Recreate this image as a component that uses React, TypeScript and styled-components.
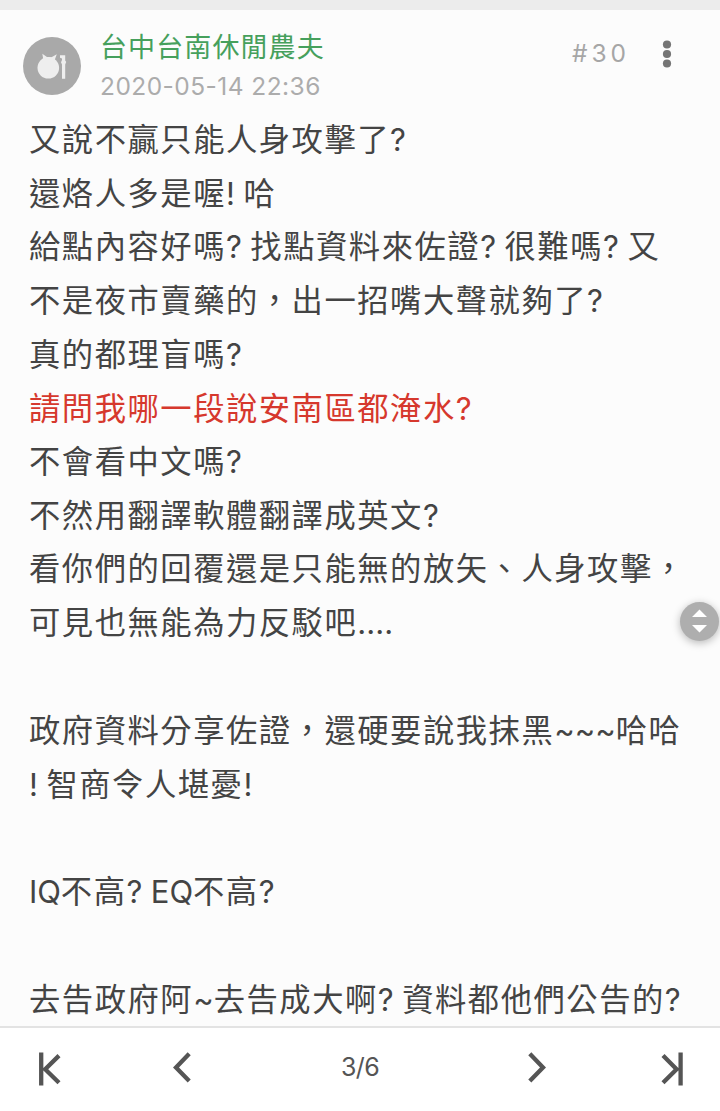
import React from "react";
import styled, { createGlobalStyle } from "styled-components";

const GlobalStyle = createGlobalStyle`
  * { box-sizing: border-box; }
  body {
    margin: 0;
    background: #fcfcfc;
    font-family: Inter, "Noto Sans CJK TC", sans-serif;
    color: #444;
  }
`;

const Page = styled.div`
  display: flex;
  flex-direction: column;
  width: 720px;
  height: 1111px;
  overflow: hidden;
  position: relative;
`;

const TopStrip = styled.div`
  flex: none;
  height: 10px;
  background: #ececec;
`;

const Header = styled.header`
  flex: none;
  display: flex;
  align-items: flex-start;
  height: 103px;
  padding: 18px 44px 0 23px;
`;

const Avatar = styled.svg`
  flex: none;
  width: 58px;
  height: 58px;
  margin: 9px 19px 0 0;
`;

const Author = styled.div`
  flex: 1;
  display: flex;
  flex-direction: column;
`;

const Name = styled.span`
  font-family: "Noto Sans CJK TC", sans-serif;
  font-size: 27px;
  line-height: 36px;
  letter-spacing: 1.1px;
  color: #46a05c;
`;

const PostTime = styled.time`
  font-size: 24.5px;
  line-height: 44px;
  letter-spacing: 0.45px;
  color: #acacac;
`;

const FloorNumber = styled.span`
  font-size: 24.5px;
  line-height: 50px;
  letter-spacing: 4px;
  color: #a6a6a6;
`;

const MoreIcon = styled.svg`
  flex: none;
  width: 18px;
  height: 30px;
  margin: 11px 0 0 28px;
`;

const Body = styled.main`
  flex: 1;
  min-height: 0;
  padding-left: 29px;
  overflow: hidden;
`;

const Line = styled.p<{ $alert?: boolean }>`
  margin: 0;
  height: 53.72px;
  line-height: 53.72px;
  font-size: 31.3px;
  letter-spacing: 1.53px;
  white-space: pre;
  color: ${(p) => (p.$alert ? "#d6382d" : "#444")};
`;

const Latin = styled.span<{ $track: number }>`
  font-size: 31px;
  letter-spacing: ${(p) => p.$track}px;
`;

const ScrollButton = styled.button`
  position: absolute;
  right: 1px;
  top: 602px;
  width: 39px;
  height: 39px;
  padding: 0;
  border: 0;
  border-radius: 50%;
  background: #aeaeae;
  box-shadow: 0 2px 8px rgba(0, 0, 0, 0.28);
  svg { display: block; }
`;

const Pager = styled.nav`
  flex: none;
  display: grid;
  grid-template-columns: 100px 164px 192px 162px 102px;
  height: 85px;
  border-top: 2px solid #e3e3e3;
  background: #fff;
`;

const PageButton = styled.button`
  padding: 0;
  border: 0;
  background: none;
  svg { display: block; }
`;

const PageCount = styled.span`
  font-size: 25px;
  line-height: 79px;
  letter-spacing: -0.6px;
  text-align: center;
  color: #555;
`;

const lines: { text: string; alert?: boolean }[] = [
  { text: "又說不贏只能人身攻擊了?" },
  { text: "還烙人多是喔! 哈" },
  { text: "給點內容好嗎? 找點資料來佐證? 很難嗎? 又" },
  { text: "不是夜市賣藥的，出一招嘴大聲就夠了?" },
  { text: "真的都理盲嗎?" },
  { text: "請問我哪一段說安南區都淹水?", alert: true },
  { text: "不會看中文嗎?" },
  { text: "不然用翻譯軟體翻譯成英文?" },
  { text: "看你們的回覆還是只能無的放矢、人身攻擊，" },
  { text: "可見也無能為力反駁吧...." },
  { text: "" },
  { text: "政府資料分享佐證，還硬要說我抹黑~~~哈哈" },
  { text: "! 智商令人堪憂!" },
  { text: "" },
  { text: "IQ不高? EQ不高?" },
  { text: "" },
  { text: "去告政府阿~去告成大啊? 資料都他們公告的?" },
];

const tracking = (run: string) => (run.startsWith(".") ? 0.1 : run.startsWith("~") ? 0 : -0.1);

function PostLine({ text, alert }: { text: string; alert?: boolean }) {
  return (
    <Line $alert={alert}>
      {text.split(/([\x20-\x7e]+)/).map((run, i) =>
        i % 2 ? (
          <Latin key={i} $track={tracking(run)}>{run}</Latin>
        ) : (
          run
        )
      )}
    </Line>
  );
}

export default function App() {
  return (
    <Page>
      <GlobalStyle />
      <TopStrip />
      <Header>
        <Avatar viewBox="0 0 58 58">
          <circle cx="29" cy="29" r="29" fill="#a9a9a9" />
          <g fill="#eee">
            <circle cx="25.3" cy="30.8" r="10.8" />
            <path d="M19.3 16.8 24.3 20.3H28.5L33.8 17.2 31.5 23.5 20.5 23.5Z" />
            <path d="M37 18.3H42.2V23.5L43.2 25 42.2 27.5V41.8H39V27.5L38 25.3 39 23V21.5L37 20.8Z" />
          </g>
        </Avatar>
        <Author>
          <Name>台中台南休閒農夫</Name>
          <PostTime>2020-05-14 22:36</PostTime>
        </Author>
        <FloorNumber>#30</FloorNumber>
        <MoreIcon viewBox="0 0 18 30" fill="#757575">
          <circle cx="9" cy="5.5" r="4.1" />
          <circle cx="9" cy="15" r="4.1" />
          <circle cx="9" cy="24.5" r="4.1" />
        </MoreIcon>
      </Header>
      <Body>
        {lines.map((line, i) => (
          <PostLine key={i} {...line} />
        ))}
      </Body>
      <Pager>
        <PageButton aria-label="First page">
          <svg width="100" height="83" viewBox="0 0 100 83" fill="none" stroke="#555" strokeWidth="4.3">
            <path d="M41.2 24.5V57.5M59 27.6 45.2 41.2 59 54.8" />
          </svg>
        </PageButton>
        <PageButton aria-label="Previous page">
          <svg width="164" height="83" viewBox="0 0 164 83" fill="none" stroke="#555" strokeWidth="4.3">
            <path d="M89.2 25.8 76 39.4 89.2 53" />
          </svg>
        </PageButton>
        <PageCount>3/6</PageCount>
        <PageButton aria-label="Next page">
          <svg width="162" height="83" viewBox="0 0 162 83" fill="none" stroke="#555" strokeWidth="4.3">
            <path d="M73.8 25.8 87 39.4 73.8 53" />
          </svg>
        </PageButton>
        <PageButton aria-label="Last page">
          <svg width="102" height="83" viewBox="0 0 102 83" fill="none" stroke="#555" strokeWidth="4.3">
            <path d="M62.6 24.5V57.5M45 27.6 58.6 41.2 45 54.8" />
          </svg>
        </PageButton>
      </Pager>
      <ScrollButton aria-label="Scroll">
        <svg width="39" height="39" viewBox="0 0 39 39" fill="#fff">
          <path d="M19.5 7.5 27 15H12ZM12 23H27L19.5 30.5Z" />
        </svg>
      </ScrollButton>
    </Page>
  );
}
